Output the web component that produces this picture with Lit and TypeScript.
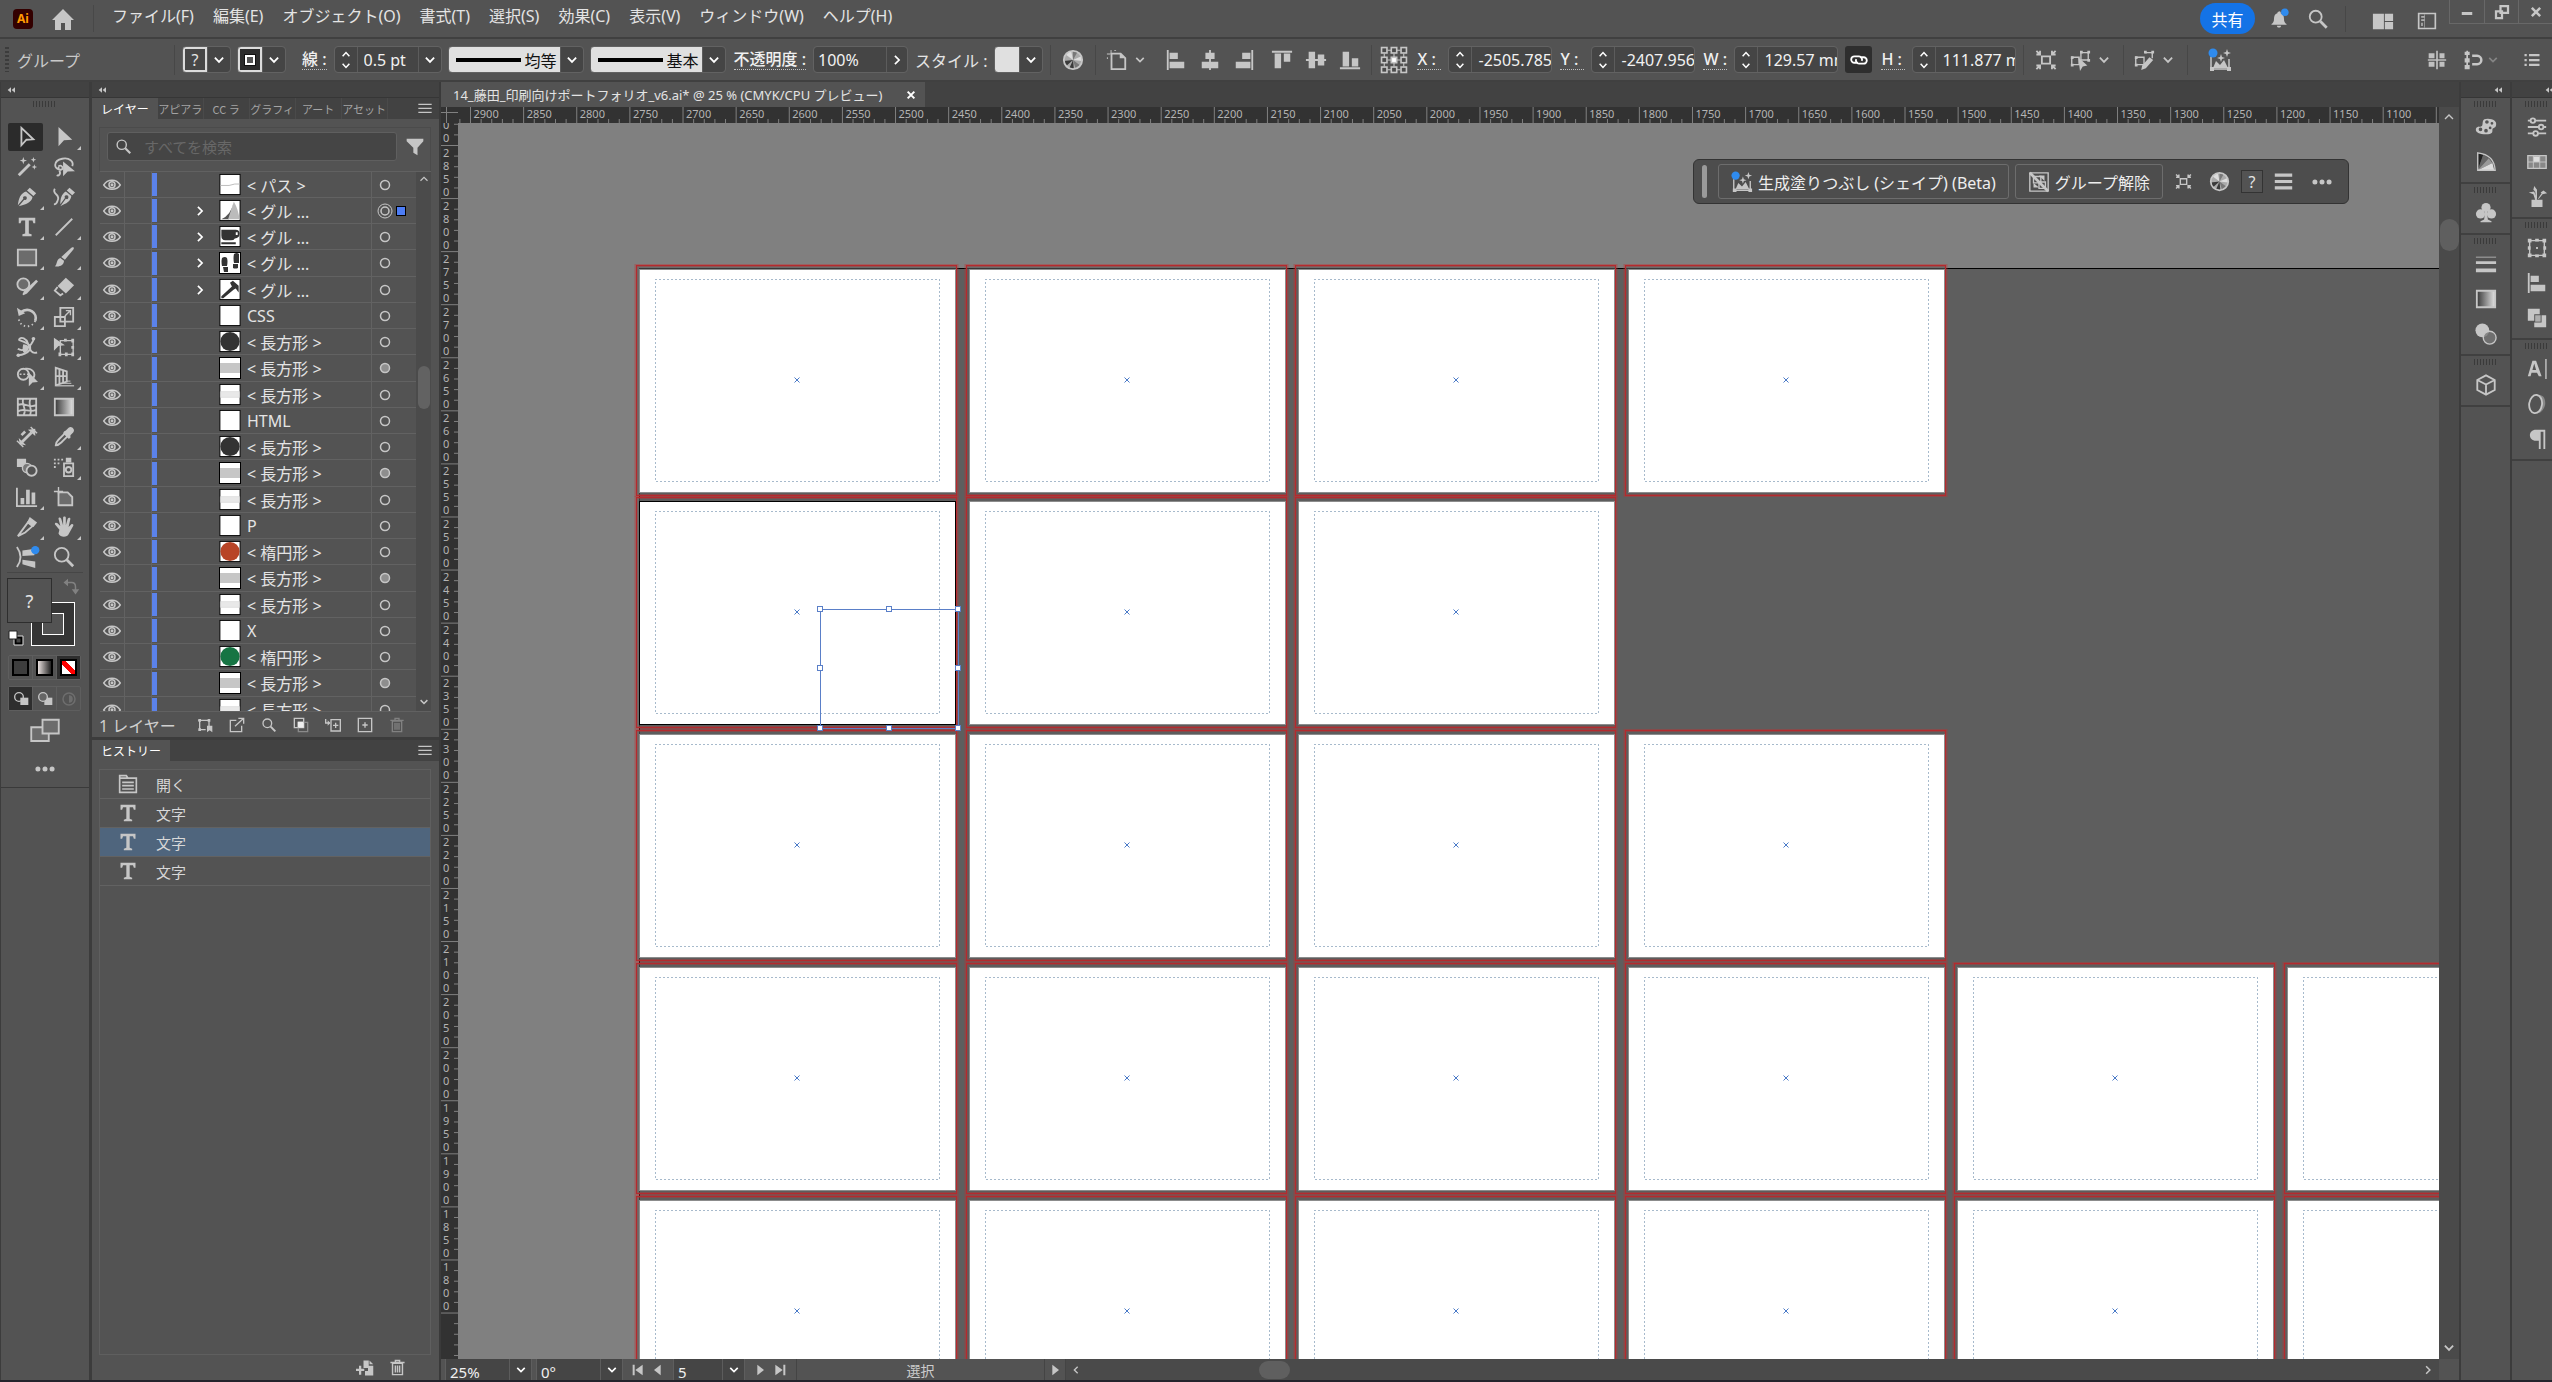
import { LitElement, html, css, svg, nothing } from "lit";
import { customElement, property } from "lit/decorators.js";
import { classMap } from "lit/directives/class-map.js";

/* ---------- icon set, all drawn on a 24 unit grid ---------- */
const ICONS: Record<string, unknown> = {
  home: svg`<path class="f" d="M12 2 1 13h3v10h6v-7h4v7h6V13h3z"/>`,
  chev: svg`<path class="s w2" d="m7.500 9.500 4.500 4.500 4.500-4.500"/>`,
  chevR: svg`<path class="s w2" d="m9.500 7 5 5-5 5"/>`,
  chevL: svg`<path class="s w2" d="m14.500 7-5 5 5 5"/>`,
  chevU: svg`<path class="s w2" d="m6 15 6-6 6 6"/>`,
  dbl: svg`<path class="f" d="M12 8v8l-5-4zM18 8v8l-5-4z"/>`,
  close: svg`<path class="s w3" d="m7 7 10 10M17 7 7 17"/>`,
  min: svg`<path class="f" d="M5 12h14v4H5z"/>`,
  restore: svg`<path class="s w3" d="M10 4h10v9H10zM4 11h8v9H4z"/>`,
  bell: svg`<path class="f" d="M12 3a1.500 1.500 0 0 1 2 2c3 1 4 3 4 7 0 3 1 5 3 6v1H3v-1c2-1 3-3 3-6 0-4 1-6 4-7a2 2 0 0 1 2-2zM9.500 20h5c0 3-5 3-5 0z"/><circle class="b" cx="19" cy="4" r="4.500"/>`,
  search: svg`<circle class="s w2" cx="9.500" cy="9.500" r="6.500"/><path class="s w3" d="m14.500 14.500 7 7"/>`,
  layout: svg`<path class="f" d="M1 4h12v17H1zM14 4h9v8h-9zM14 13h9v8h-9z"/>`,
  panel: svg`<path class="s w2" d="M2 3h20v18H2z"/><path class="f" d="M5 6h4v2H5zM5 10h4v2H5zM5 14h2v4H5z" opacity=".8"/><path class="s" d="M9 4v16" opacity=".6"/>`,
  wheel: svg`<circle cx="12" cy="12" r="10" fill="#aaa"/><path d="M12 12 4 6a10 10 0 0 1 6-4zM12 12l9-4a10 10 0 0 1 1 5z" fill="#ddd"/><path d="M12 12 2 13l2 6zM12 12l-4 9 5 1z" fill="#3a3a3a"/><path d="m12 12 3 10 5-4zM12 12l0-10 5 1z" fill="#787878"/><circle class="s w2" fill="none" cx="12" cy="12" r="10"/>`,
  doc: svg`<path class="s w2" d="M6 5h10l5 5v12H6z"/><path class="f" d="M15 4v6h6zM5 1h1v4H5zM1 5h4v1H1zM9 1h2v1H9zM1 9h1v2H1z"/>`,
  alL: svg`<path class="f" d="M2 1h2v22H2zM5 4h9v7H5zM5 14h16v7H5z"/>`,
  alC: svg`<path class="f" d="M11 1h2v22h-2zM7 4h10v7H7zM3 14h18v7H3z"/>`,
  alR: svg`<path class="f" d="M20 1h2v22h-2zM10 4h9v7h-9zM3 14h16v7H3z"/>`,
  alT: svg`<path class="f" d="M1 2h22v2H1zM4 5h7v16H4zM14 5h7v9h-7z"/>`,
  alM: svg`<path class="f" d="M1 11h22v2H1zM4 3h7v18H4zM14 6h7v12h-7z"/>`,
  alB: svg`<path class="f" d="M1 20h22v2H1zM4 3h7v16H4zM14 10h7v9h-7z"/>`,
  ref: svg`<path class="s" d="M3 6v12M21 6v12M6 3h12M6 21h12M12 6v12M6 12h12"/>${[1, 10, 19].map((x) => [1, 10, 19].map((y) => svg`<rect x=${x - 0.5} y=${y - 0.5} width="5" height="5" fill=${x === 10 && y === 10 ? "#fff" : "#4a4a4a"} class="s w15"/>`))}`,
  link: svg`<path class="s w2" d="M11 15H7a3.500 3.500 0 0 1 0-7h5a3.500 3.500 0 0 1 3 5M13 9h4a3.500 3.500 0 0 1 0 7h-5a3.500 3.500 0 0 1-3-5"/>`,
  isolate: svg`<path class="s w2" d="M7.500 8h9v8h-9z"/><path class="s w2" d="m1.500 2 4 4m-4 0h4V2M22.500 2l-4 4m4 0h-4V2M1.500 22l4-4m-4 0h4v4M22.500 22l-4-4m4 0h-4v4"/>`,
  similar: svg`<path class="s w15" d="M13 4h8v8h-8zM3 9h8v8H3z"/><path class="f" d="M12 2h3v3h-3zM20 2h3v3h-3zM20 11h3v3h-3zM2 8h3v3H2zM2 16h3v3H2zM10 9l10 9-5 1-3 5z"/>`,
  editSim: svg`<path class="s w15" d="M13 4h8v6M3 9h9v8H3z"/><path class="f" d="M12 2h3v3h-3zM20 2h3v3h-3zM2 8h3v3H2zM2 16h3v3H2zM10 18l8-9 4 3-8 9-5 2z"/>`,
  gen: svg`<path class="s w15" d="M3 9v12h18V11"/><path class="f" d="M2 19h4v4H2zM19 19h4v4h-4zM5 20l3-7 4 4 4-5 4 8zM19 1l1 3 3 1-3 1-1 3-1-3-3-1 3-1zM13 6l1 3 3 1-3 1-1 3-1-3-3-1 3-1z"/><circle class="b" cx="5" cy="5" r="4.500"/>`,
  snapA: svg`<path class="f" d="M11 1h2v22h-2zM2 4h7v6H2zM15 4h6v6h-6zM2 14h7v6H2zM15 14h6v6h-6zM1 11h22v2H1z" opacity=".95"/>`,
  snapB: svg`<path class="f" d="M2 2h6v4H2zM2 10h6v5H2zM2 18h6v5H2zM4 1h2v22H4z"/><path class="s w3" d="M11 7h6a5 5 0 0 1 0 10h-6"/>`,
  list: svg`<path class="f" d="M8 4h14v3H8zM8 10.500h14v3H8zM8 17h14v3H8zM2 4h3v3H2zM2 10.500h3v3H2zM2 17h3v3H2z"/>`,
  menu: svg`<path class="f" d="M2 4h20v2H2zM2 10h20v2H2zM2 16h20v2H2z"/>`,
  bars: svg`<path class="f" d="M1 2h22v4H1zM1 10h22v4H1zM1 18h22v4H1z"/>`,
  dots: svg`<circle class="f" cx="3.500" cy="12" r="3"/><circle class="f" cx="12" cy="12" r="3"/><circle class="f" cx="20.500" cy="12" r="3"/>`,
  ungroup: svg`<path class="s w15" d="M2 2h20v20H2zM6 6h8v7H6zM12 12h7v7h-7z"/><path class="f" d="M12 5h6v6zM6 13l6 5H6z"/><path class="s w3" d="m2 2 20 20"/>`,
  filter: svg`<path class="f" d="M2 2h20v3l-7 8v9l-5-3v-6L2 5z"/>`,
  eye: svg`<path class="s w2" d="M1 12c5-8.500 17-8.500 22 0-5 7.500-17 7.500-22 0z"/><circle class="s w2" cx="12" cy="11.500" r="4"/><circle class="f" cx="12" cy="11.500" r="2"/>`,
  /* tools */
  sel: svg`<path class="s w2" d="M7 2v19l5.500-6 7.500-.500z"/>`,
  dsel: svg`<path class="f" d="M6 1v21l6-6.500 9-.500z"/>`,
  wand: svg`<path class="s w3" d="M3 21 15 9"/><path class="f" d="m8 1 1 3 3 1-3 1-1 3-1-3-3-1 3-1zM19 1l.800 2.200L22 4l-2.200.800L19 7l-.800-2.200L16 4l2.200-.800zM20 9l.800 2.200L23 12l-2.200.800L20 15l-.800-2.200L17 12l2.200-.800z"/>`,
  lasso: svg`<path class="s w2" d="M9 15c-9 0-9-10 1-12 8-1.500 13 3 11 8M6 11c4-2 6 3 3 4s-4-3-2-3M7 16c2 4-1 6-3 5"/><path class="f" d="M11 6v16l5-5 8-.500z"/>`,
  pen: svg`<path class="f" d="M15 2l7 6-3 3-7-6zM11 6l7 6c-1 6-7 8-15 10l6-7a2 2 0 1 0-1-1l-6 7C3 13 5 8 11 6z"/>`,
  curv: svg`<path class="f" d="M18 2l6 5-3 3-6-5zM14 6l6 5c-1 6-5 8-12 11l6-8a2 2 0 1 0-1-1l-5 7c0-6 1-11 6-14z"/><path class="s w2" d="M2 3c-4 6 7 6 3 13-1 3-3 4-4 4"/>`,
  type: svg`<path class="f" d="M3 2h18v6h-2l-1-3h-4v14l3 1v2H7v-2l3-1V5H6L5 8H3z"/>`,
  line: svg`<path class="s w2" d="M3 21 21 3"/>`,
  rect: svg`<path d="M2 4h20v17H2z" fill="#6c6c6c" class="s w2"/>`,
  brush: svg`<path class="f" d="M22 1c1 1 1 2 0 3l-9 11-4-3L20 2zM8 13l4 3c0 5-5 7-10 6 3-2 1-7 6-9z"/>`,
  shaper: svg`<circle cx="8" cy="9" r="6.500" fill="#6c6c6c" class="s w2"/><path class="f" d="M22 4l2 2-12 13-4 2-1-1 2-4z"/>`,
  eraser: svg`<path class="f" d="m14 2 9 8-9 9-9-8z"/><path class="s w2" d="m5 12-3 4 6 5 3-2"/>`,
  rotate: svg`<path class="s w3" d="M5 7c9-7 19 1 16 9"/><path class="f" d="M1 2l2 9 7-3z"/><path class="s w2" stroke-dasharray="1.500 3" d="M21 16c-3 8-16 9-18-2"/>`,
  scale: svg`<path class="s w2" d="M8 2h14v15H8zM2 12h11v10H2z"/><path class="s w15" d="m13 11 6-6M14 5h5v5"/>`,
  warp: svg`<path class="s w2" d="M2 21C14 20 20 12 12 8S2 5 4 3s7-1 9 5 3 12 10 10M2 14c6 4 14-1 18-12"/><path class="f" d="M8 9c5 0 8 4 4 8s-6-1-4-8z"/><circle class="f" cx="2.500" cy="21" r="2"/><circle class="f" cx="19" cy="3" r="2"/>`,
  free: svg`<path class="s w15" d="M8 5h14v15H8z"/><path class="f" d="M1 2v14l5-5 7-1zM12 3h3v3h-3zM20 3h3v4h-3zM20 11h3v3h-3zM20 18h3v4h-3zM13 18h3v4h-3zM6 18h3v4H6z"/>`,
  builder: svg`<circle class="s w2" cx="8" cy="9" r="6"/><path class="s w2" d="M10 3c8-1 12 5 9 10"/><path class="s w15" stroke-dasharray="2 2" d="M4 9h10"/><path class="f" d="M14 7v15l4-4 6-.500z"/>`,
  persp: svg`<path class="s w2" d="M3 2v19l12-4V6zM3 11h12M7 4v16M11 5v13"/><path class="s w15" d="M3 21.500h20M10 19h10M15 16.500h4" opacity=".8"/>`,
  mesh: svg`<path class="s w2" d="M2 3h20v18H2zM2 10c7-4 12 4 20 0M2 17c7-5 12 2 20-2M8 3c-3 6 5 12 0 18M16 3c-4 6 3 12-1 18"/>`,
  grad: svg`<defs><linearGradient id="gr"><stop offset="0" stop-color="#383838"/><stop offset="1" stop-color="#e4e4e4"/></linearGradient></defs><path d="M2 3h20v18H2z" fill="url(#gr)" class="s w2"/>`,
  measure: svg`<path class="s w3" d="m6 18 11-11"/><path class="f" d="m3 13 1 7 7 1zM13 4l8 7V3zM5 9l4-4 2 2-4 4z"/><path class="s w15" d="m1 16 7 7M16 1l7 7"/>`,
  drop: svg`<path class="s w2" d="M3 21c0-3 1-4 3-6l7-7 3 3-7 7c-2 2-4 3-6 3z"/><path class="f" d="M12 6l2-1 3-3c3-3 8 2 5 5l-3 3v3l-2 1-6-6z"/>`,
  blend: svg`<path class="f" d="M1 3h10v9H1z"/><circle cx="12" cy="13" r="5" fill="#777" class="s w15"/><circle cx="17" cy="16" r="5.500" fill="#535353" class="s w2"/>`,
  spray: svg`<path class="s w2" d="M12 8h10v14H12z"/><circle class="s w2" cx="17" cy="15" r="3"/><path class="f" d="M14 2h6v5h-6zM1 3h2v2H1zM5 3h2v2H5zM9 3h2v2H9zM1 7h2v2H1zM5 7h2v2H5zM1 11h2v2H1z"/>`,
  graph: svg`<path class="s w2" d="M1 2v20h22"/><path class="f" d="M5 13h4v7H5zM11 4h4v16h-4zM17 7h4v13h-4z"/>`,
  artb: svg`<path d="M6 7h10l5 5v9H6z" fill="#6c6c6c" class="s w2"/><path class="s w15" d="M1 6h10M6 1v8"/>`,
  slice: svg`<path class="s w2" d="M2 22 13 7l5 4-8 7z"/><path class="f" d="M15 1l8 6-4 5-7-5z"/>`,
  hand: svg`<path class="f" d="M7 15 2 9c0-2 2-2 3-1l3 3L6 3c0-2 2-2 3 0l2 7V2c0-2 3-2 3 0v8l2-7c1-2 3-1 3 0l-2 9 3-3c1-1 3 0 2 2l-5 9c-1 3-9 4-11-1z"/>`,
  width: svg`<path class="s w2" d="M1 1c5 7 5 15 0 22"/><path class="f" d="M7 5l14-2-1 7-13 1zM7 15l14 2v7L7 20z"/><circle class="b" cx="21" cy="4.500" r="4.500"/>`,
  zoomT: svg`<circle class="s w2" cx="9.500" cy="9.500" r="7.500"/><path class="s w3" d="m15 15 7 7"/>`,
  swap: svg`<path class="s w2" d="M6 6h7q5 0 5 6v5"/><path class="f" d="M8 1v10L2 6zM13 15h10l-5 7z"/>`,
  /* panel footers */
  fArt: svg`<path class="s w2" d="M4 5v14h9M2 5h16v9"/><path class="f" d="M2 3h4v4H2zM16 3h4v4h-4zM2 17h4v4H2zM15 13h8v10l-4-3-4 3z"/>`,
  fExp: svg`<path class="s w2" d="M11 5H2v17h17v-9M9 14 22 2M14 2h8v8"/>`,
  fMask: svg`<path class="s w2" d="M2 2h14v14H2z"/><path d="M8 8h14v14H8z" fill="none" stroke="#8a8a8a" stroke-width="2"/><path fill="#eee" d="M7 7h9v9H7z"/>`,
  fSub: svg`<path class="s w2" d="M9 4h14v17H9zM12 12.500h8M16 8.500v8M1 3v6h6"/><path class="f" d="M4 5l4 4-4 4z"/>`,
  fNew: svg`<path class="s w2" d="M2 2h20v20H2zM8 12h8M12 8v8"/>`,
  trash: svg`<path class="s w2" d="M5 6h14v16H5zM2 5h20M9 4V2h6v2M9 9v10M12 9v10M15 9v10"/>`,
  fDoc: svg`<path class="f" d="M10 2h7v7h6v13H12v-6h4v-4h-6zM18 2l5 5h-5zM4 9h3v4h4v3H7v5H4v-5H0v-3h4z"/>`,
  open: svg`<path class="s w2" d="M2 2h8l2 3h10v17H2zM2 5h10"/><path class="s w2" d="M5 10h14M5 14h14M5 18h14"/>`,
  screen: svg`<path d="M1 9h14v11H1z" fill="#6c6c6c" class="s w15"/><path d="M10 3h13v11H10z" fill="#6c6c6c" class="s w15"/>`,
  d1: svg`<circle class="s w2" cx="9" cy="9" r="6.500"/><path class="f" d="M11 10h12v11H11z"/>`,
  d2: svg`<path class="f" d="M11 10h12v11H11z"/><circle cx="9" cy="9" r="6.500" fill="#666" class="s w2"/>`,
  d3: svg`<circle cx="12" cy="12" r="8" fill="none" stroke="#6e6e6e" stroke-width="2"/><path d="M12 12V7a5 5 0 0 1 0 10z" fill="#6e6e6e"/>`,
  /* right docks */
  palette: svg`<path class="f" fill-rule="evenodd" d="M14 3c6 0 10 3 9 7s-4 2-4 5 0 5-7 5S0 18 1 14s6-1 7-4-1-7 6-7zM4 14.500a2 2 0 1 0 4 0 2 2 0 1 0-4 0M10 16a2 2 0 1 0 4 0 2 2 0 1 0-4 0M15 13a1.500 1.500 0 1 0 3 0 1.500 1.500 0 1 0-3 0M17 8a1.500 1.500 0 1 0 3 0 1.500 1.500 0 1 0-3 0M11 6.500a2 2 0 1 0 4 0 2 2 0 1 0-4 0"/>`,
  guide: svg`<path d="M3 2v19L9 4z" fill="#222"/><path d="M3 21 9 4l6 4z" fill="#666"/><path d="m3 21 12-13 4 5z" fill="#999"/><path d="m3 21 16-8 2 8z" fill="#ddd"/><path class="s w15" d="M3 2q18 2 19 19H3z"/>`,
  club: svg`<circle class="f" cx="12" cy="6" r="5"/><circle class="f" cx="6" cy="13" r="5"/><circle class="f" cx="18" cy="13" r="5"/><path class="f" d="M11 8h2l1 11 4 2v1H6v-1l4-2z"/>`,
  strokes: svg`<path class="f" d="M1 4h22v1H1zM1 9h22v3H1zM1 17h22v4H1z"/>`,
  transp: svg`<circle class="f" cx="8" cy="8" r="7.500"/><circle cx="16" cy="16" r="7" fill="#777" fill-opacity=".8" class="s w15"/>`,
  cube: svg`<path class="s w2" d="m12 1.500 9.500 5v11l-9.500 5-9.500-5v-11zM2.500 6.500l9.500 5 9.500-5M12 11.500v11"/>`,
  sliders: svg`<path class="s w2" d="M2 5h3M10 5h12M2 12h12M19 12h3M2 19h6M13 19h9"/><circle class="s w2" cx="7.500" cy="5" r="2.500"/><circle class="s w2" cx="16.500" cy="12" r="2.500"/><circle class="s w2" cx="10.500" cy="19" r="2.500"/>`,
  swatches: svg`<path d="M2 5h20v14H2z" fill="#888" class="s w15"/><path d="M8 6h7v6H8z" fill="#ddd"/><path class="s" d="M2 12h20M8 5v14M15 5v14"/>`,
  brushes: svg`<path class="f" d="M6 15h12v8H6zM10 15 8 9 3 7l6-1 3 9zM11 14 10 6 8 4l1-4 3 4v10zM13 14l4-6-1-1 3-2 4 3-5 1-4 5z"/>`,
  transform: svg`<path class="s w15" d="M4 4h16v16H4z"/><path class="f" d="M2 2h4v4H2zM10 2h4v3h-4zM18 2h4v4h-4zM2 10h3v4H2zM19 10h3v4h-3zM2 18h4v4H2zM10 19h4v3h-4zM18 18h4v4h-4zM11 11h2v2h-2z"/>`,
  path: svg`<path class="f" d="M2 2h13v6H9v7H2zM17 9h5v13H9v-5h8z"/><path class="f" opacity=".8" d="M10 9h6v7h-6z"/>`,
  charA: svg`<path class="f" fill-rule="evenodd" d="M7 3h4l6 17h-3l-2-4H6l-1 4H2zM9 6l-2 7h4zM21 1h1.500v22H21z"/>`,
  otype: svg`<path d="M13 2c6 0 8 4 8 9s-4 11-8 11c3-3 5-6 5-11s-1-7-5-9z" fill="#888"/><ellipse class="s w2" cx="10.500" cy="12" rx="7" ry="10" transform="rotate(8 10 12)"/>`,
  para: svg`<path class="f" d="M11 2h10v21h-2V4h-3v19h-2v-9h-3C2 14 2 2 11 2z"/>`,
  first: svg`<path class="f" d="M4 4h3v16H4zM19 4v16L8 12z"/>`,
  prev: svg`<path class="f" d="M16 4v16L6 12z"/>`,
  next: svg`<path class="f" d="M8 4v16l10-8z"/>`,
  last: svg`<path class="f" d="M17 4h3v16h-3zM5 4v16l11-8z"/>`,
  spin: svg`<path class="s w2" d="m7.500 7 4.500-5 4.500 5M7.500 17l4.500 5 4.500-5"/>`,
};
const grip = () => svg`${[0, 3, 6, 9, 12, 15, 18, 21].map((x) => svg`<rect x=${x} y="0" width="1" height="6"/>`)}`;
const icon = (n: string, size = 24) =>
  html`<svg class="ic" width=${size} height=${size} viewBox="0 0 24 24" aria-hidden="true">${ICONS[n]}</svg>`;

const shared = css`
  :host { font-family: "Noto Sans", "Noto Sans CJK JP", sans-serif; font-size: 16px; color: #e4e4e4; box-sizing: border-box; }
  *, *::before, *::after { box-sizing: border-box; }
  button, input, select { font: inherit; color: inherit; background: none; border: 0; margin: 0; padding: 0; border-radius: 0; }
  button { display: inline-flex; align-items: center; justify-content: center; flex: none; }
  ul, ol { margin: 0; padding: 0; list-style: none; }
  .ic { display: block; flex: none; color: #c6c6c6; overflow: visible; }
  .f { fill: currentColor; }
  .b { fill: #2f8bee; }
  .s { stroke: currentColor; stroke-width: 1; }
  .s:not([fill]) { fill: none; }
  .w15 { stroke-width: 1.5; }
  .w2 { stroke-width: 2; }
  .w3 { stroke-width: 3; }
  .grip { display: block; fill: #3a3a3a; }
`;

/* ---------- menu bar ---------- */
@customElement("menu-bar")
class MenuBar extends LitElement {
  static styles = [shared, css`
    :host { display: flex; height: 39px; background: #535353; border-bottom: 2px solid #404040; padding-left: 13px; align-items: stretch; }
    .logo { align-self: center; width: 20px; height: 20px; background: #300; color: #ff9a00; border-radius: 4px; font-size: 12px; font-weight: 700; line-height: 20px; text-align: center; }
    .home { width: 60px; }
    nav { display: flex; gap: 1px; padding-left: 9px; border-left: 1px solid #484848; margin: 5px 0; align-items: center; }
    nav button { padding: 0 9px; white-space: nowrap; height: 22px; align-self: flex-start; line-height: 22px; }
    .right { margin-left: auto; display: flex; align-items: center; }
    .share { width: 55px; height: 31px; border-radius: 16px; background: #1473e6; color: #fff; margin-right: 4px; }
    .tool { width: 39px; height: 36px; }
    .sep { width: 1px; height: 26px; background: #474747; margin: 0 15px 0 8px; }
    .wide { width: 44px; padding-top: 4px; height: 36px; }
    .win { display: flex; align-self: flex-start; height: 24px; border: 1px solid #686868; border-top: 0; border-right: 0; }
    .win button { width: 34px; }
    .win button + button { border-left: 1px solid #686868; }
  `];
  render() {
    const menus = ["ファイル(F)", "編集(E)", "オブジェクト(O)", "書式(T)", "選択(S)", "効果(C)", "表示(V)", "ウィンドウ(W)", "ヘルプ(H)"];
    return html`
      <span class="logo">Ai</span>
      <button class="home" aria-label="ホーム">${icon("home", 24)}</button>
      <nav>${menus.map((m) => html`<button>${m}</button>`)}</nav>
      <div class="right">
        <button class="share">共有</button>
        <button class="tool" aria-label="通知">${icon("bell", 20)}</button>
        <button class="tool" aria-label="検索">${icon("search", 22)}</button>
        <span class="sep"></span>
        <button class="wide" aria-label="ワークスペース">${icon("layout", 22)}</button>
        <button class="wide" aria-label="パネル">${icon("panel", 20)}</button>
        <div class="win">
          <button aria-label="最小化">${icon("min", 18)}</button>
          <button aria-label="元に戻す">${icon("restore", 18)}</button>
          <button aria-label="閉じる">${icon("close", 20)}</button>
        </div>
      </div>`;
  }
}

/* ---------- control bar ---------- */
@customElement("control-bar")
class ControlBar extends LitElement {
  static styles = [shared, css`
    :host { display: flex; align-items: center; gap: 8px; height: 43px; background: #535353; border-bottom: 2px solid #404040; padding: 0 11px 0 5px; white-space: nowrap; overflow: hidden; }
    :host > * { flex: none; }
    .edge { width: 4px; height: 25px; background: repeating-linear-gradient(#3c3c3c 0 2px, transparent 2px 4px); }
    .kind { width: 149px; color: #c9c9c9; }
    .sep { width: 1px; height: 30px; background: #474747; }
    .box { display: flex; height: 25px; background: #454545; border-radius: 3px; outline: 1px solid #626262; }
    .box > * + * { border-left: 1px solid #5c5c5c; }
    .arrow { width: 23px; }
    .arrow .ic, .spin .ic { color: #fff; }
    .arrow.wide { width: 21px; }
    .sw { width: 24px; border: 2px solid #dcdcdc; }
    .sw.fill { background: #474747; }
    .sw.stroke { background: #2c2c2c; }
    .inner { width: 10px; height: 10px; border: 2px solid #fff; background: #555; outline: 1px solid #111; }
    .lab { border-bottom: 1px dotted #c0c0c0; line-height: 20px; color: #f0f0f0; min-width: 24px; font-weight: 500; margin-left: 1px; }
    .spin { width: 22px; }
    input { padding: 0 0 0 6px; width: 80px; height: 25px; color: #f2f2f2; min-width: 0; }
    input.pt { width: 61px; } input.pc { width: 72px; padding-left: 4px; }
    .line { display: flex; align-items: center; justify-content: flex-end; gap: 4px; width: 111px; background: #e0e0e0; color: #111; padding-right: 3px; }
    .line::before { content: ""; flex: 1; height: 4px; background: #000; margin-left: 7px; }
    .blank { width: 24px; background: #e0e0e0; }
    .ico { width: 28px; height: 30px; }
    .pair { width: 47px; height: 30px; gap: 2px; }
    .al { display: flex; gap: 8px; padding-left: 4px; }
    .al button { width: 26px; height: 30px; }
    .link { width: 27px; height: 27px; background: #2e2e2e; border-radius: 3px; }
    .link .ic { color: #fff; }
    .end { margin-left: auto; display: flex; align-items: center; gap: 16px; }
    .dim { margin-right: 4px; }
    .dim .ic:last-child { color: #858585; }
  `];
  private num(id: string, label: string, value: string) {
    return html`<label class="lab" for=${id}>${label} :</label>
      <span class="box"><button class="spin" aria-label=${label}>${icon("spin", 18)}</button><input id=${id} .value=${value}></span>`;
  }
  private arrow(label: string) { return html`<button class="arrow" aria-label=${label}>${icon("chev", 22)}</button>`; }
  render() {
    return html`
      <span class="edge"></span><span class="kind">グループ</span><span class="sep"></span>
      <span class="box"><button class="sw fill">?</button>${this.arrow("塗り")}</span>
      <span class="box"><button class="sw stroke" aria-label="線"><span class="inner"></span></button>${this.arrow("線")}</span>
      <span></span>
      <label class="lab" for="sw">線 :</label>
      <span class="box"><button class="spin" aria-label="線幅">${icon("spin", 18)}</button><input class="pt" id="sw" value="0.5 pt">${this.arrow("線幅")}</span>
      <span class="box"><button class="line">均等</button>${this.arrow("可変線幅")}</span>
      <span class="box"><button class="line">基本</button>${this.arrow("ブラシ")}</span>
      <label class="lab" for="op">不透明度 :</label>
      <span class="box"><input class="pc" id="op" value="100%"><button class="arrow wide" aria-label="不透明度">${icon("chevR", 20)}</button></span>
      <span>スタイル :</span>
      <span class="box"><span class="blank"></span>${this.arrow("スタイル")}</span>
      <span class="sep"></span>
      <button class="ico" aria-label="オブジェクトを再配色">${icon("wheel", 22)}</button>
      <span class="sep"></span>
      <button class="pair" aria-label="整列対象">${icon("doc", 22)}${icon("chev", 20)}</button>
      <span class="al">${["alL", "alC", "alR"].map((n) => html`<button aria-label="整列">${icon(n, 22)}</button>`)}</span>
      <span class="al">${["alT", "alM", "alB"].map((n) => html`<button aria-label="整列">${icon(n, 22)}</button>`)}</span>
      <span class="sep"></span>
      <button class="ico" aria-label="基準点">${icon("ref", 26)}</button>
      ${this.num("x", "X", "-2505.785")}${this.num("y", "Y", "-2407.956")}${this.num("w", "W", "129.57 mm")}
      <button class="link" aria-label="縦横比を固定">${icon("link", 22)}</button>
      ${this.num("h", "H", "111.877 mm")}
      <span class="sep"></span>
      <button class="ico" aria-label="編集モード">${icon("isolate", 22)}</button>
      <button class="pair" aria-label="共通オブジェクト">${icon("similar", 22)}${icon("chev", 22)}</button>
      <span class="sep"></span>
      <button class="pair" aria-label="類似オブジェクト">${icon("editSim", 22)}${icon("chev", 22)}</button>
      <span class="sep"></span>
      <button class="pair" aria-label="生成塗りつぶし">${icon("gen", 24)}</button>
      <span class="end">
        <button aria-label="グリッド">${icon("snapA", 20)}</button>
        <button class="dim" aria-label="スナップ">${icon("snapB", 20)}${icon("chev", 20)}</button>
        <button aria-label="メニュー">${icon("list", 18)}</button>
      </span>`;
  }
}

/* ---------- tool box ---------- */
@customElement("tool-box")
class ToolBox extends LitElement {
  static styles = [shared, css`
    :host { display: flex; flex-direction: column; width: 92px; background: #535353; border-right: 3px solid #3c3c3c; border-left: 1px solid #3c3c3c; }
    .top { height: 16px; background: #424242; border-bottom: 1px solid #363636; padding-left: 2px; }
    .grip { margin: 3px 0 0 32px; }
    .tools { display: grid; grid-template-columns: 37px 37px; grid-auto-rows: 30px; padding: 15px 0 0 7px; }
    .tools button { position: relative; }
    .tools .on { background: #2b2b2b; border-radius: 2px; height: 28px; width: 35px; align-self: center; }
    .more::after { content: ""; position: absolute; right: 1px; bottom: 2px; border: 2px solid transparent; border-right-color: #c6c6c6; border-bottom-color: #c6c6c6; }
    .colors { border-top: 1px solid #464646; margin: 0 6px; height: 83px; position: relative; }
    .colors > * { position: absolute; }
    .stroke { left: 24px; top: 29px; width: 44px; height: 44px; background: #353535; border: 1px solid #fff; }
    .stroke::after { content: ""; position: absolute; inset: 10px; border: 1px solid #fff; background: #535353; }
    .fill { left: 0; top: 5px; width: 45px; height: 45px; background: #535353; border: 1px solid #2e2e2e; font-size: 18px; }
    .swap { left: 55px; top: 5px; opacity: .4; }
    .def { left: 1px; top: 57px; width: 16px; height: 16px; }
    .modes { display: flex; margin: 0 7px 6px; border: 1px solid #5e5e5e; border-radius: 2px; height: 25px; width: 73px; }
    .modes button { flex: 1; }
    .modes button + button { border-left: 1px solid #5e5e5e; }
    .modes .on { background: #2e2e2e; }
    .c { width: 17px; height: 17px; border: 2px solid #000; background: #3d3d3d; }
    .c.g { background: linear-gradient(90deg, #e8e0de, #222); }
    .c.n { background: linear-gradient(-45deg, #fff 0 38%, #f00 38% 62%, #fff 62%); rotate: 90deg; }
    .screen { height: 28px; }
    .etc { height: 42px; padding-top: 6px; }
    .foot { border-top: 1px solid #3a3a3a; flex: 1; }
  `];
  render() {
    const t = ["sel", "dsel*", "wand", "lasso", "pen*", "curv", "type*", "line*", "rect*", "brush*", "shaper*", "eraser*", "rotate*", "scale*", "warp*", "free*", "builder*", "persp*", "mesh", "grad", "measure", "drop*", "blend", "spray*", "graph*", "artb", "slice*", "hand*", "width", "zoomT"];
    return html`
      <div class="top">${icon("dbl", 16)}</div>
      <svg class="grip" width="24" height="6">${grip()}</svg>
      <div class="tools">${t.map((n, i) => html`<button aria-label=${n.replace("*", "")} class=${classMap({ on: i === 0, more: n.endsWith("*") })}>${icon(n.replace("*", ""), 22)}</button>`)}</div>
      <div class="colors">
        <button class="stroke" aria-label="線"></button><button class="fill">?</button>
        <button class="swap" aria-label="入れ替え">${icon("swap", 18)}</button>
        <svg class="def" viewBox="0 0 16 16"><path d="M6 6h9v9H6z" fill="#000" stroke="#ddd"/><path d="M8 8h5v5H8z" fill="#444" stroke="#000"/><path d="M1 1h8v8H1z" fill="#fff" stroke="#222"/></svg>
      </div>
      <div class="modes"><button aria-label="カラー"><span class="c"></span></button><button aria-label="グラデーション"><span class="c g"></span></button><button class="on" aria-label="なし"><span class="c n"></span></button></div>
      <div class="modes"><button class="on" aria-label="標準描画">${icon("d1", 16)}</button><button aria-label="背面描画">${icon("d2", 16)}</button><button aria-label="内側描画">${icon("d3", 18)}</button></div>
      <button class="screen" aria-label="スクリーンモード">${icon("screen", 30)}</button>
      <button class="etc" aria-label="ツールバーを編集">${icon("dots", 20)}</button>
      <div class="foot"></div>`;
  }
}

/* ---------- layers + history ---------- */
type Row = [string, string, string?];
const ROWS: Row[] = [
  ["< パス >", "path"], ["< グル ...", "cone", "s"], ["< グル ...", "cup", "g"], ["< グル ...", "feet", "g"], ["< グル ...", "hammer", "g"],
  ["CSS", "white"], ["< 長方形 >", "dark"], ["< 長方形 >", "gray", "f"], ["< 長方形 >", "light"], ["HTML", "white"], ["< 長方形 >", "dark"],
  ["< 長方形 >", "gray", "f"], ["< 長方形 >", "light"], ["P", "white"], ["< 楕円形 >", "red"], ["< 長方形 >", "gray", "f"], ["< 長方形 >", "light"],
  ["X", "white"], ["< 楕円形 >", "green"], ["< 長方形 >", "gray", "f"], ["< 長方形 >", "light"],
];
const THUMBS: Record<string, unknown> = {
  white: nothing,
  path: svg`<path d="M1 12h9l6-1.500h5" fill="none" stroke="#bbb"/>`,
  cone: svg`<path d="M2 20Q12 16 15 2l-5 18z" fill="#555"/><path d="M15 2q4 6 6 18H9z" fill="#bbb"/>`,
  cup: svg`<path fill-rule="evenodd" d="M2 4h15q4 0 4 4 0 5-5 5-1 2-4 2H6q-4 0-4-5zM17 6.500v3h2v-3zM2 17h15v2H2z" fill="#333"/>`,
  feet: svg`<path d="M3 6q3-2 5 0 1 3 0 8H3q-1-5 0-8zM4 15h5v5H5zM15 2q3-2 5 0v9h-5q-1-5 0-9zM14 12h5v4q-3 1-5 0z" fill="#333"/>`,
  hammer: svg`<path d="m2 18 11-10-2-4 3-2 6 5v7l-3-4-2 1L4 20H2z" fill="#333"/>`,
  dark: svg`<circle cx="11" cy="11" r="10" fill="#333"/>`,
  gray: svg`<path d="M1 6h20v10H1z" fill="#c6c6c6"/>`,
  light: svg`<path d="M1 8h20v6H1z" fill="#e8e8e8" stroke="#ccc" stroke-width=".500"/>`,
  red: svg`<circle cx="11" cy="11" r="10" fill="#b84427"/>`,
  green: svg`<circle cx="11" cy="11" r="10" fill="#167443"/>`,
};
@customElement("side-panels")
class SidePanels extends LitElement {
  static styles = [shared, css`
    :host { display: flex; flex-direction: column; width: 349px; background: #535353; border-right: 2px solid #3a3a3a; min-height: 0; }
    .top { height: 16px; background: #424242; border-bottom: 1px solid #363636; padding-left: 2px; flex: none; }
    .tabs { display: flex; height: 21px; background: #424242; font-family: "Noto Sans CJK JP", sans-serif; color: #a4a4a4; padding-right: 6px; flex: none; }
    .tab { width: 46px; font-size: 11px; white-space: nowrap; border-right: 1px solid #4a4a4a; }
    .tab.on { width: auto; padding: 0 9px; background: #535353; color: #fff; border: 0; font-size: 12px; }
    .tabs .m { margin-left: auto; }
    .search { display: flex; align-items: center; margin: 8px 8px 0 7px; padding: 4px 5px 10px 7px; height: 44px; border: 1px solid #4b4b4b; border-bottom: 0; justify-content: space-between; flex: none; }
    .field { display: flex; align-items: center; width: 290px; height: 29px; background: #454545; border: 1px solid #5f5f5f; border-radius: 3px; padding-left: 7px; gap: 12px; }
    .field input { flex: 1; min-width: 0; font-size: 15px; }
    .field input::placeholder { color: #686868; opacity: 1; }
    .scroll { display: flex; height: 541px; margin: 0 8px; border-top: 1px solid #616161; border-bottom: 1px solid #616161; flex: none; }
    .rows { flex: 1; overflow: hidden; }
    .rows li { display: grid; grid-template-columns: 25px 27px 5px 33px 29px 28px 1fr 45px; height: 26px; border-bottom: 1px solid #626262; align-items: center; white-space: nowrap; }
    .rows li:nth-child(4n) { height: 27px; }
    .rows li > * { height: 100%; display: flex; align-items: center; }
    .rows .eye, .rows .lock { border-right: 1px solid #626262; }
    .bar::before { content: ""; width: 5px; height: 23px; background: #5b82ea; }
    .exp { grid-column: 5; }
    .exp .ic { color: #fff; }
    .th { grid-column: 6; }
    .name { grid-column: 7; }
    .tg { grid-column: 8; border-left: 1px solid #626262; padding-left: 5px; gap: 3px; }
    .sq { width: 10px; height: 10px; background: #4d7df5; border: 1px solid #000; }
    .track { width: 15px; background: #4b4b4b; display: flex; flex-direction: column; align-items: center; justify-content: space-between; }
    .thumb { width: 12px; height: 43px; border-radius: 6px; background: #626262; margin: 180px 0 auto; }
    .foot { display: flex; align-items: center; height: 25px; padding: 0 26px 0 7px; flex: none; color: #cfcfcf; }
    .foot span { flex: 1; }
    .foot button { width: 32px; }
    .gap { height: 3px; background: #3c3c3c; flex: none; }
    .hist { margin: 8px 8px 0 7px; border: 1px solid #5f5f5f; flex: 1; }
    .hist li { height: 29px; border-bottom: 1px solid #626262; display: flex; align-items: center; gap: 18px; padding-left: 18px; font-size: 15px; color: #d8d8d8; }
    .hist .on { background: #4f657d; }
    .off { opacity: .4; }
  `];
  render() {
    return html`
      <div class="top">${icon("dbl", 16)}</div>
      <div class="tabs">
        <button class="tab on">レイヤー</button>
        ${["アピアラ", "CC ラ", "グラフィ", "アート", "アセット"].map((t) => html`<button class="tab">${t}</button>`)}
        <button class="m" aria-label="パネルメニュー">${icon("menu", 16)}</button>
      </div>
      <div class="search">
        <label class="field">${icon("search", 17)}<input type="text" aria-label="検索" placeholder="すべてを検索"></label>
        <button aria-label="フィルター">${icon("filter", 20)}</button>
      </div>
      <div class="scroll">
        <ul class="rows">${ROWS.map(([n, th, k]) => html`<li>
          <button class="eye" aria-label="表示">${icon("eye", 18)}</button><span class="lock"></span><span class="bar"></span>
          <span class="exp">${k === "g" || k === "s" ? icon("chevR", 20) : nothing}</span>
          <svg class="th" width="22" height="26" viewBox="0 -2 22 26"><rect x=".500" y=".500" width="21" height="21" fill="#fff" stroke="#000"/>${THUMBS[th]}</svg>
          <span class="name">${n}</span>
          <span class="tg"><svg width="16" height="16" viewBox="0 0 16 16" class="ic"><circle cx="8" cy="8" r=${k === "s" ? 4 : 4.5} fill=${k === "f" ? "#8e8e8e" : "none"} class="s w15"/>${k === "s" ? svg`<circle cx="8" cy="8" r="7" class="s"/>` : nothing}</svg>${k === "s" ? html`<i class="sq"></i>` : nothing}</span>
        </li>`)}</ul>
        <div class="track">${icon("chevU", 14)}<span class="thumb"></span>${icon("chev", 18)}</div>
      </div>
      <div class="foot"><span>1 レイヤー</span>
        ${["fArt", "fExp", "search", "fMask", "fSub", "fNew"].map((n) => html`<button aria-label=${n}>${icon(n, 16)}</button>`)}
        <button class="off" aria-label="削除">${icon("trash", 16)}</button></div>
      <div class="gap"></div>
      <div class="tabs"><button class="tab on">ヒストリー</button><button class="m" aria-label="パネルメニュー">${icon("menu", 16)}</button></div>
      <ol class="hist">
        <li>${icon("open", 20)}開く</li><li>${icon("type", 20)}文字</li><li class="on">${icon("type", 20)}文字</li><li>${icon("type", 20)}文字</li>
      </ol>
      <div class="foot"><span></span><button aria-label="新規ドキュメント">${icon("fDoc", 18)}</button><button aria-label="削除">${icon("trash", 17)}</button></div>`;
  }
}

/* ---------- document window ---------- */
const COLS = [181, 511, 840, 1170, 1499, 1829];
const BOARD_ROWS: [number, number][] = [[146, 4], [378, 3], [611, 4], [844, 6], [1077, 6]];
const STEP = 53.13;
@customElement("doc-window")
class DocWindow extends LitElement {
  static styles = [shared, css`
    :host { display: grid; grid-template: 25px 16px 1fr 21px / 17px 1fr 20px; min-width: 0; min-height: 0; background: #424242; overflow: hidden; }
    .tabs { grid-column: 1 / -1; display: flex; }
    .tab { display: flex; align-items: center; justify-content: space-between; width: 484px; padding: 0 6px 0 12px; background: #535353; font-size: 13px; white-space: nowrap; }
    .tab .ic { color: #fff; }
    .corner, .hr, .vr { background: #323232; display: block; width: 100%; height: 100%; }
    .hr, .vr { font-size: 11px; fill: #b4b4b4; overflow: hidden; }
    .tick { stroke: #808080; }
    .hr-cell, .vr-cell, .cv { min-width: 0; min-height: 0; overflow: hidden; position: relative; }
    .cv { background: #808080; }
    .cv > svg { position: absolute; inset: 0; width: 100%; height: 100%; display: block; }
    .vs { grid-row: 2 / 4; grid-column: 3; background: #4a4a4a; display: flex; flex-direction: column; align-items: center; justify-content: space-between; padding: 2px 0 0; }
    .vs .th { width: 19px; height: 32px; border-radius: 10px; background: #5f5f5f; margin: 94px 0 auto; }
    .ctx { position: absolute; left: 1235px; top: 36px; display: flex; align-items: center; gap: 6px; height: 45px; padding: 0 8px; background: #4d4d4d; border: 1px solid #333; border-radius: 6px; white-space: nowrap; }
    .hd { width: 5px; height: 33px; border-radius: 3px; background: #9a9a9a; margin-right: 5px; }
    .ctx button { height: 35px; gap: 5px; width: 35px; }
    .ctx .lb { border: 1px solid #6d6d6d; border-radius: 3px; padding: 0 12px; width: auto; color: #eee; }
    .ctx .q { width: 22px; height: 23px; border: 1px solid #333; background: #535353; }
    .ctx .n { width: 30px; }
    .status { grid-column: 1 / -1; display: flex; align-items: stretch; background: #535353; padding-left: 5px; }
    .status .box { display: flex; background: #454545; outline: 1px solid #5e5e5e; margin-right: 6px; }
    .status input { width: 63px; padding: 4px 0 0 4px; font-size: 15px; min-width: 0; height: 21px; color: #f0f0f0; }
    .status .box.pg input { width: 48px; }
    .status .box button { width: 22px; border-left: 1px solid #5c5c5c; }
    .status .box .ic { color: #fff; }
    .status > button { width: 20px; }
    .status .pg { margin: 0 6px; }
    .mode { width: 249px; text-align: center; border-left: 1px solid #444; border-right: 1px solid #444; font-size: 14px; line-height: 24px; color: #ccc; margin-left: 6px; }
    .hs { flex: 1; display: flex; align-items: center; background: #4a4a4a; border-left: 1px solid #444; margin-right: 20px; justify-content: space-between; padding: 0 2px; }
    .hs .th { width: 31px; height: 18px; border-radius: 9px; background: #5f5f5f; margin: 0 auto 0 175px; }
  `];
  private hRuler() {
    return svg`${Array.from({ length: 39 }, (_, i) => i - 1).map((k) => {
      const x = 12.5 + k * STEP;
      return svg`<path class="tick" d=${`M${x} 0v16` + [1, 2, 3, 4].map((m) => `M${x + (m * STEP) / 5} 12v4`).join("")}/>${k >= 0 && k < 37 ? svg`<text x=${x + 3} y="11">${2900 - 50 * k}</text>` : nothing}`;
    })}`;
  }
  private vRuler() {
    return svg`${Array.from({ length: 25 }, (_, i) => i - 1).map((k) => {
      const y = 22.5 + k * 53.07;
      return svg`<path class="tick" d=${`M0 ${y}h17` + [1, 2, 3, 4].map((m) => `M13 ${y + (m * 53.07) / 5}h4`).join("")}/>${k < 22 ? String(2850 - 50 * k).split("").map((c, j) => svg`<text x="2" y=${y + 11 + j * 13}>${c}</text>`) : nothing}`;
    })}`;
  }
  private board(x: number, y: number, active: boolean) {
    const cx = x + 158, cy = y + 111;
    return svg`<rect x=${x - 3} y=${y - 3.5} width="321" height="230" fill="#5e5e5e" fill-opacity=".6" stroke="#c03030" stroke-opacity=".4" stroke-width="3"/>
      <rect x=${x - 2.5} y=${y - 3.5} width="320" height="230" fill="none" stroke="#b42a2e"/>
      <rect x=${x + 0.5} y=${y + 0.5} width="316" height="223" fill="#fff" stroke=${active ? "#000" : "#8c8c8c"}/>
      <rect x=${x + 16.5} y=${y + 10.5} width="284" height="202" fill="none" stroke="#4f7499" stroke-dasharray="1 3"/>
      <path d=${`M${cx - 2.5} ${cy - 2.5}l5 5M${cx + 2.5} ${cy - 2.5}l-5 5`} stroke="#4a7ac8"/>`;
  }
  render() {
    return html`
      <div class="tabs"><div class="tab"><span>14_藤田_印刷向けポートフォリオ_v6.ai* @ 25 % (CMYK/CPU プレビュー)</span><button aria-label="閉じる">${icon("close", 16)}</button></div></div>
      <svg class="corner"><path class="tick" d="M0 5.500h17M5.500 0v16"/></svg>
      <div class="hr-cell"><svg class="hr">${this.hRuler()}</svg></div>
      <div class="vs">${icon("chevU", 16)}<span class="th"></span>${icon("chev", 22)}</div>
      <div class="vr-cell"><svg class="vr">${this.vRuler()}</svg></div>
      <div class="cv">
        <svg>
          <rect x="181.500" y="145.500" width="4000" height="4000" fill="#5e5e5e" stroke="#000"/>
          ${BOARD_ROWS.map(([y, n], r) => COLS.slice(0, n).map((x, c) => this.board(x, y, r === 1 && c === 0)))}
          <rect x="362.500" y="486.500" width="138" height="119" fill="none" stroke="#5a7fc8"/>
          ${[362, 431, 500].map((x) => [486, 545, 605].map((y) => (x === 431 && y === 545 ? nothing : svg`<rect x=${x - 2.5} y=${y - 2.5} width="5" height="5" fill="#fff" stroke="#5a7fc8"/>`)))}
        </svg>
        <div class="ctx">
          <span class="hd"></span>
          <button class="lb">${icon("gen", 22)}生成塗りつぶし (シェイプ) (Beta)</button>
          <button class="lb">${icon("ungroup", 22)}グループ解除</button>
          <button class="n" aria-label="編集モード">${icon("isolate", 17)}</button>
          <button class="n" aria-label="再配色">${icon("wheel", 21)}</button>
          <button class="q">?</button>
          <button class="n" aria-label="線">${icon("bars", 19)}</button>
          <button aria-label="その他">${icon("dots", 20)}</button>
        </div>
      </div>
      <div class="status">
        <span class="box"><input aria-label="ズーム" value="25%"><button aria-label="ズーム">${icon("chev", 20)}</button></span>
        <span class="box"><input aria-label="回転" value="0°"><button aria-label="回転">${icon("chev", 20)}</button></span>
        <button aria-label="最初">${icon("first", 16)}</button><button aria-label="前へ">${icon("prev", 16)}</button>
        <span class="box pg"><input aria-label="アートボード" value="5"><button aria-label="アートボード">${icon("chev", 20)}</button></span>
        <button aria-label="次へ">${icon("next", 16)}</button><button aria-label="最後">${icon("last", 16)}</button>
        <span class="mode">選択</span><button aria-label="表示項目">${icon("next", 16)}</button>
        <div class="hs">${icon("chevL", 16)}<span class="th"></span>${icon("chevR", 18)}</div>
      </div>`;
  }
}

/* ---------- collapsed icon dock ---------- */
@customElement("icon-dock")
class IconDock extends LitElement {
  @property({ attribute: false }) groups: string[][] = [];
  static styles = [shared, css`
    :host { display: flex; flex-direction: column; background: #535353; border-left: 2px solid #3c3c3c; width: 51px; }
    .top { height: 16px; background: #424242; border-bottom: 1px solid #363636; display: flex; justify-content: flex-end; padding-right: 4px; flex: none; }
    .grp { display: flex; flex-direction: column; align-items: center; border-bottom: 2px solid #404040; padding: 3px 0 3px; flex: none; }
    .grp .grip { margin-bottom: 2px; }
    .grp button { width: 36px; height: 35px; }
  `];
  render() {
    return html`<div class="top">${icon("dbl", 16)}</div>
      ${this.groups.map((gr) => html`<div class="grp"><svg class="grip" width="24" height="6">${grip()}</svg>${gr.map((n) => html`<button aria-label=${n}>${icon(n, 22)}</button>`)}</div>`)}`;
  }
}

@customElement("app-root")
class AppRoot extends LitElement {
  static styles = [shared, css`
    :host { display: grid; grid-template-rows: 39px 43px minmax(0, 1fr) 2px; height: 100vh; background: #24242c; overflow: hidden; }
    .body { display: grid; grid-template-columns: 92px 349px minmax(0, 1fr) 51px 42px; min-height: 0; }
    .last { width: 51px; }
  `];
  render() {
    return html`<menu-bar></menu-bar><control-bar></control-bar>
      <main class="body">
        <tool-box></tool-box><side-panels></side-panels><doc-window></doc-window>
        <icon-dock .groups=${[["palette", "guide"], ["club"], ["strokes", "grad", "transp"], ["cube"]]}></icon-dock>
        <icon-dock class="last" .groups=${[["sliders", "swatches", "brushes"], ["transform", "alL", "path"], ["charA", "otype", "para"]]}></icon-dock>
      </main>`;
  }
}
